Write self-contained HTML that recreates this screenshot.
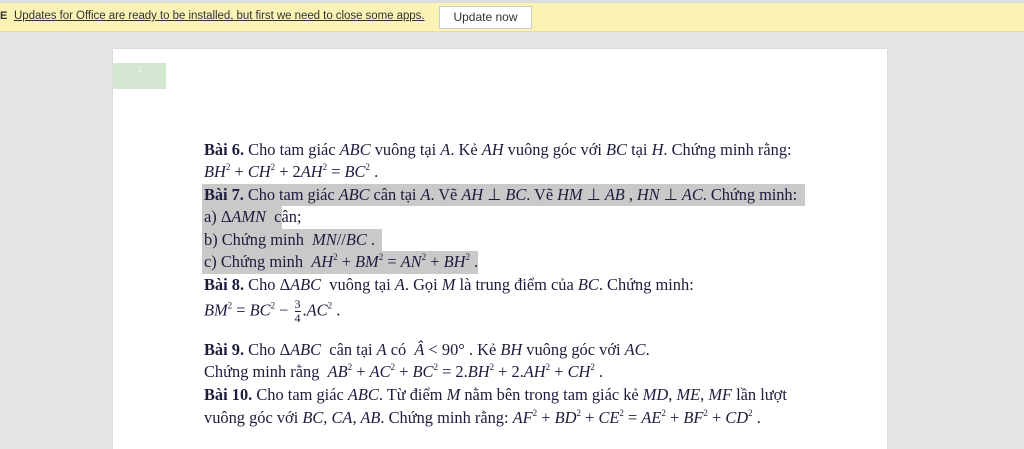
<!DOCTYPE html>
<html><head><meta charset="utf-8"><style>
body{margin:0;width:1024px;height:447px;overflow:hidden;background:#e4e4e4;position:relative;font-family:"Liberation Serif",serif;}
.bar{position:absolute;left:0;top:3px;width:1024px;height:28px;background:#fbf3b6;border-bottom:1px solid #e8dc9a;}
.top{position:absolute;left:0;top:0;width:1024px;height:3px;background:#ddd;}
.msg{position:absolute;left:14px;top:10px;font-family:"Liberation Sans",sans-serif;font-size:11.5px;letter-spacing:-0.05px;color:#333;text-decoration:underline;}
.e{position:absolute;left:0;top:10px;font-family:"Liberation Sans",sans-serif;font-size:11px;color:#333;font-weight:bold}
.btn{position:absolute;left:439px;top:6px;width:91px;height:21px;background:#fff;border:1px solid #ccc;font-family:"Liberation Sans",sans-serif;font-size:12px;color:#333;text-align:center;line-height:21px;}
.page{position:absolute;left:113px;top:49px;width:774px;height:400px;background:#fff;box-shadow:0 0 1px #bbb;}
.green{position:absolute;left:113px;top:63px;width:53px;height:26px;background:#d3e6cf;color:#fff;font-size:8px;text-align:center;line-height:14px;}
.l{position:absolute;left:204px;font-size:16.4px;color:#1c1c3c;white-space:nowrap;}
.hl{position:absolute;background:#c9c9c9;}
i{font-style:italic}
sup{font-size:9px;vertical-align:7px;line-height:0}
.fr{display:inline-block;vertical-align:middle;text-align:center;font-size:12px;line-height:13px;margin:0 2px}
.fr span{display:block}
.fr span:first-child{border-bottom:1px solid #1c1c3c}
</style></head><body>
<div class="top"></div>
<div class="bar"></div>
<div class="e">E</div>
<div class="msg">Updates for Office are ready to be installed, but first we need to close some apps.</div>
<div class="btn">Update now</div>
<div class="page"></div>
<div class="green">5</div>
<div class="hl" style="left:202px;top:184px;width:603px;height:22px"></div>
<div class="hl" style="left:202px;top:206px;width:80px;height:23px"></div>
<div class="hl" style="left:202px;top:229px;width:180px;height:23px"></div>
<div class="hl" style="left:202px;top:251px;width:276px;height:23px"></div>
<div class="l" style="top:140px"><b>Bài 6.</b> Cho tam giác <i>ABC</i> vuông tại <i>A</i>. Kẻ <i>AH</i> vuông góc với <i>BC</i> tại <i>H</i>. Chứng minh rằng:</div>
<div class="l" style="top:162px"><i>BH</i><sup>2</sup> + <i>CH</i><sup>2</sup> + 2<i>AH</i><sup>2</sup> = <i>BC</i><sup>2</sup> .</div>
<div class="l" style="top:185px;letter-spacing:-0.05px"><b>Bài 7.</b> Cho tam giác <i>ABC</i> cân tại <i>A</i>. Vẽ <i>AH</i> ⊥ <i>BC</i>. Vẽ <i>HM</i> ⊥ <i>AB</i> , <i>HN</i> ⊥ <i>AC</i>. Chứng minh:</div>
<div class="l" style="top:207px">a) Δ<i>AMN</i> &nbsp;cân;</div>
<div class="l" style="top:230px">b) Chứng minh &nbsp;<i>MN</i>//<i>BC</i> .</div>
<div class="l" style="top:252px">c) Chứng minh &nbsp;<i>AH</i><sup>2</sup> + <i>BM</i><sup>2</sup> = <i>AN</i><sup>2</sup> + <i>BH</i><sup>2</sup> .</div>
<div class="l" style="top:275px"><b>Bài 8.</b> Cho Δ<i>ABC</i> &nbsp;vuông tại <i>A</i>. Gọi <i>M</i> là trung điểm của <i>BC</i>. Chứng minh:</div>
<div class="l" style="top:298px"><i>BM</i><sup>2</sup> = <i>BC</i><sup>2</sup> − <span class="fr"><span>3</span><span>4</span></span>.<i>AC</i><sup>2</sup> .</div>
<div class="l" style="top:340px"><b>Bài 9.</b> Cho Δ<i>ABC</i> &nbsp;cân tại <i>A</i> có &nbsp;<i>Â</i> &lt; 90° . Kẻ <i>BH</i> vuông góc với <i>AC</i>.</div>
<div class="l" style="top:362px">Chứng minh rằng &nbsp;<i>AB</i><sup>2</sup> + <i>AC</i><sup>2</sup> + <i>BC</i><sup>2</sup> = 2.<i>BH</i><sup>2</sup> + 2.<i>AH</i><sup>2</sup> + <i>CH</i><sup>2</sup> .</div>
<div class="l" style="top:385px"><b>Bài 10.</b> Cho tam giác <i>ABC</i>. Từ điểm <i>M</i> nằm bên trong tam giác kẻ <i>MD, ME, MF</i> lần lượt</div>
<div class="l" style="top:408px">vuông góc với <i>BC, CA, AB</i>. Chứng minh rằng: <i>AF</i><sup>2</sup> + <i>BD</i><sup>2</sup> + <i>CE</i><sup>2</sup> = <i>AE</i><sup>2</sup> + <i>BF</i><sup>2</sup> + <i>CD</i><sup>2</sup> .</div>
</body></html>
